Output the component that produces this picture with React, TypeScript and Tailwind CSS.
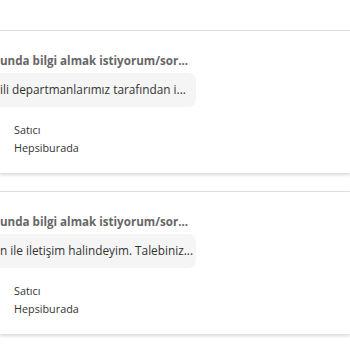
import React from "react";

const items = [
  { q: "unda bilgi almak istiyorum/sor...", a: "ili departmanlarımız tarafından i..." },
  { q: "unda bilgi almak istiyorum/sor...", a: "n ile iletişim halindeyim. Talebiniz..." },
];

export default function App() {
  return (
    <div className="w-[350px] h-[350px] bg-white overflow-hidden pt-[30px]" style={{ fontFamily: "'Open Sans', 'Noto Sans', sans-serif" }}>
      <div className="flex flex-col gap-[18px]">
        {items.map((it, i) => (
          <div key={i} className="h-[143px] border-t border-[#dedede] bg-white shadow-[0_2px_3px_rgba(0,0,0,0.15)] pt-[22px]">
            <div className="text-[11.6px] font-bold text-[#666] leading-[16px] whitespace-nowrap">{it.q}</div>
            <div className="mt-[4px] w-[196px] h-[34px] rounded-r-[8px] bg-[#f5f5f5] flex items-center">
              <span className="text-[11.8px] text-[#333] whitespace-nowrap">{it.a}</span>
            </div>
            <div className="mt-[14px] pl-[14px] text-[10.8px] text-[#333] leading-[18px]">
              <div>Satıcı</div>
              <div>Hepsiburada</div>
            </div>
          </div>
        ))}
      </div>
    </div>
  );
}
